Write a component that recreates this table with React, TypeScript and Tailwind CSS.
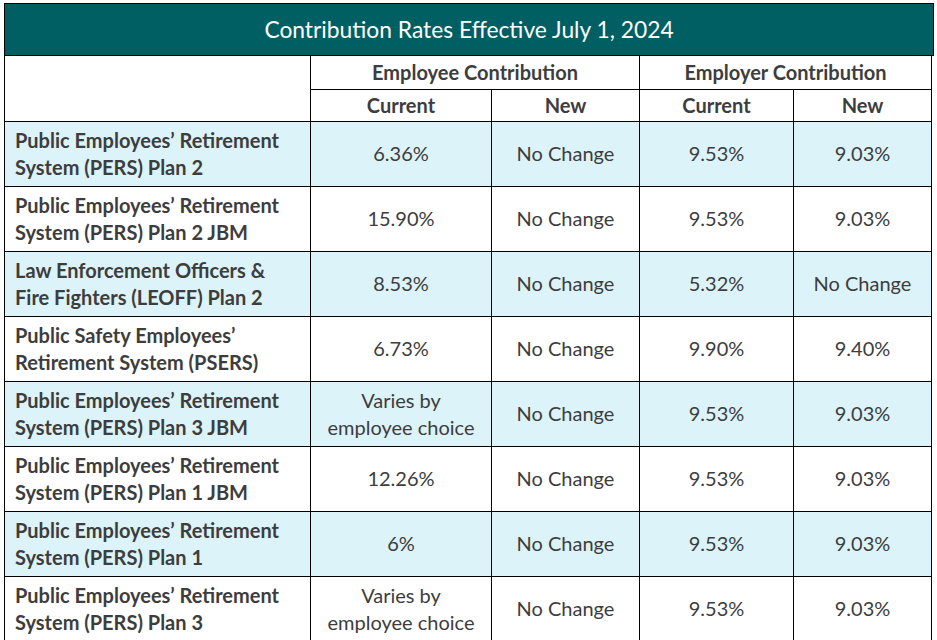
const rows = [
  { name: ["Public Employees’ Retirement", "System (PERS) Plan 2"], cur: ["6.36%"], eeNew: "No Change", erCur: "9.53%", erNew: "9.03%" },
  { name: ["Public Employees’ Retirement", "System (PERS) Plan 2 JBM"], cur: ["15.90%"], eeNew: "No Change", erCur: "9.53%", erNew: "9.03%" },
  { name: ["Law Enforcement Officers &", "Fire Fighters (LEOFF) Plan 2"], cur: ["8.53%"], eeNew: "No Change", erCur: "5.32%", erNew: "No Change" },
  { name: ["Public Safety Employees’", "Retirement System (PSERS)"], cur: ["6.73%"], eeNew: "No Change", erCur: "9.90%", erNew: "9.40%" },
  { name: ["Public Employees’ Retirement", "System (PERS) Plan 3 JBM"], cur: ["Varies by", "employee choice"], eeNew: "No Change", erCur: "9.53%", erNew: "9.03%" },
  { name: ["Public Employees’ Retirement", "System (PERS) Plan 1 JBM"], cur: ["12.26%"], eeNew: "No Change", erCur: "9.53%", erNew: "9.03%" },
  { name: ["Public Employees’ Retirement", "System (PERS) Plan 1"], cur: ["6%"], eeNew: "No Change", erCur: "9.53%", erNew: "9.03%" },
  { name: ["Public Employees’ Retirement", "System (PERS) Plan 3"], cur: ["Varies by", "employee choice"], eeNew: "No Change", erCur: "9.53%", erNew: "9.03%" },
];

const cell = "border border-black text-center align-middle";

export default function App() {
  return (
    <div className="w-[937px] h-[640px] overflow-hidden bg-white pt-[3px] pl-[4px] text-[#3d3d3d] font-['Lato','Open_Sans',sans-serif]">
      <div className="w-[930px] h-[53px] bg-[#005f63] border border-black flex items-center justify-center text-white text-[22.8px]">
        Contribution Rates Effective July 1, 2024
      </div>
      <table className="border-collapse table-fixed w-[927px] text-[20px] leading-[27px]">
        <colgroup>
          <col className="w-[306px]" />
          <col className="w-[181px]" />
          <col className="w-[148px]" />
          <col className="w-[154px]" />
          <col className="w-[138px]" />
        </colgroup>
        <thead>
          <tr className="h-[33px]">
            <th rowSpan={2} className="border border-black border-t-0" />
            <th colSpan={2} className={`${cell} border-t-0 font-bold`}>Employee Contribution</th>
            <th colSpan={2} className={`${cell} border-t-0 font-bold`}>Employer Contribution</th>
          </tr>
          <tr className="h-[32px]">
            <th className={`${cell} font-bold`}>Current</th>
            <th className={`${cell} font-bold`}>New</th>
            <th className={`${cell} font-bold`}>Current</th>
            <th className={`${cell} font-bold`}>New</th>
          </tr>
        </thead>
        <tbody>
          {rows.map((r, i) => (
            <tr key={i} className={`h-[65px] ${i % 2 === 0 ? "bg-[#dcf3f9]" : "bg-white"}`}>
              <td className="border border-black pl-[10px] align-middle font-bold">
                {r.name.map((l, j) => <div key={j}>{l}</div>)}
              </td>
              <td className={cell}>
                {r.cur.map((l, j) => <div key={j}>{l}</div>)}
              </td>
              <td className={cell}>{r.eeNew}</td>
              <td className={cell}>{r.erCur}</td>
              <td className={cell}>{r.erNew}</td>
            </tr>
          ))}
        </tbody>
      </table>
    </div>
  );
}
